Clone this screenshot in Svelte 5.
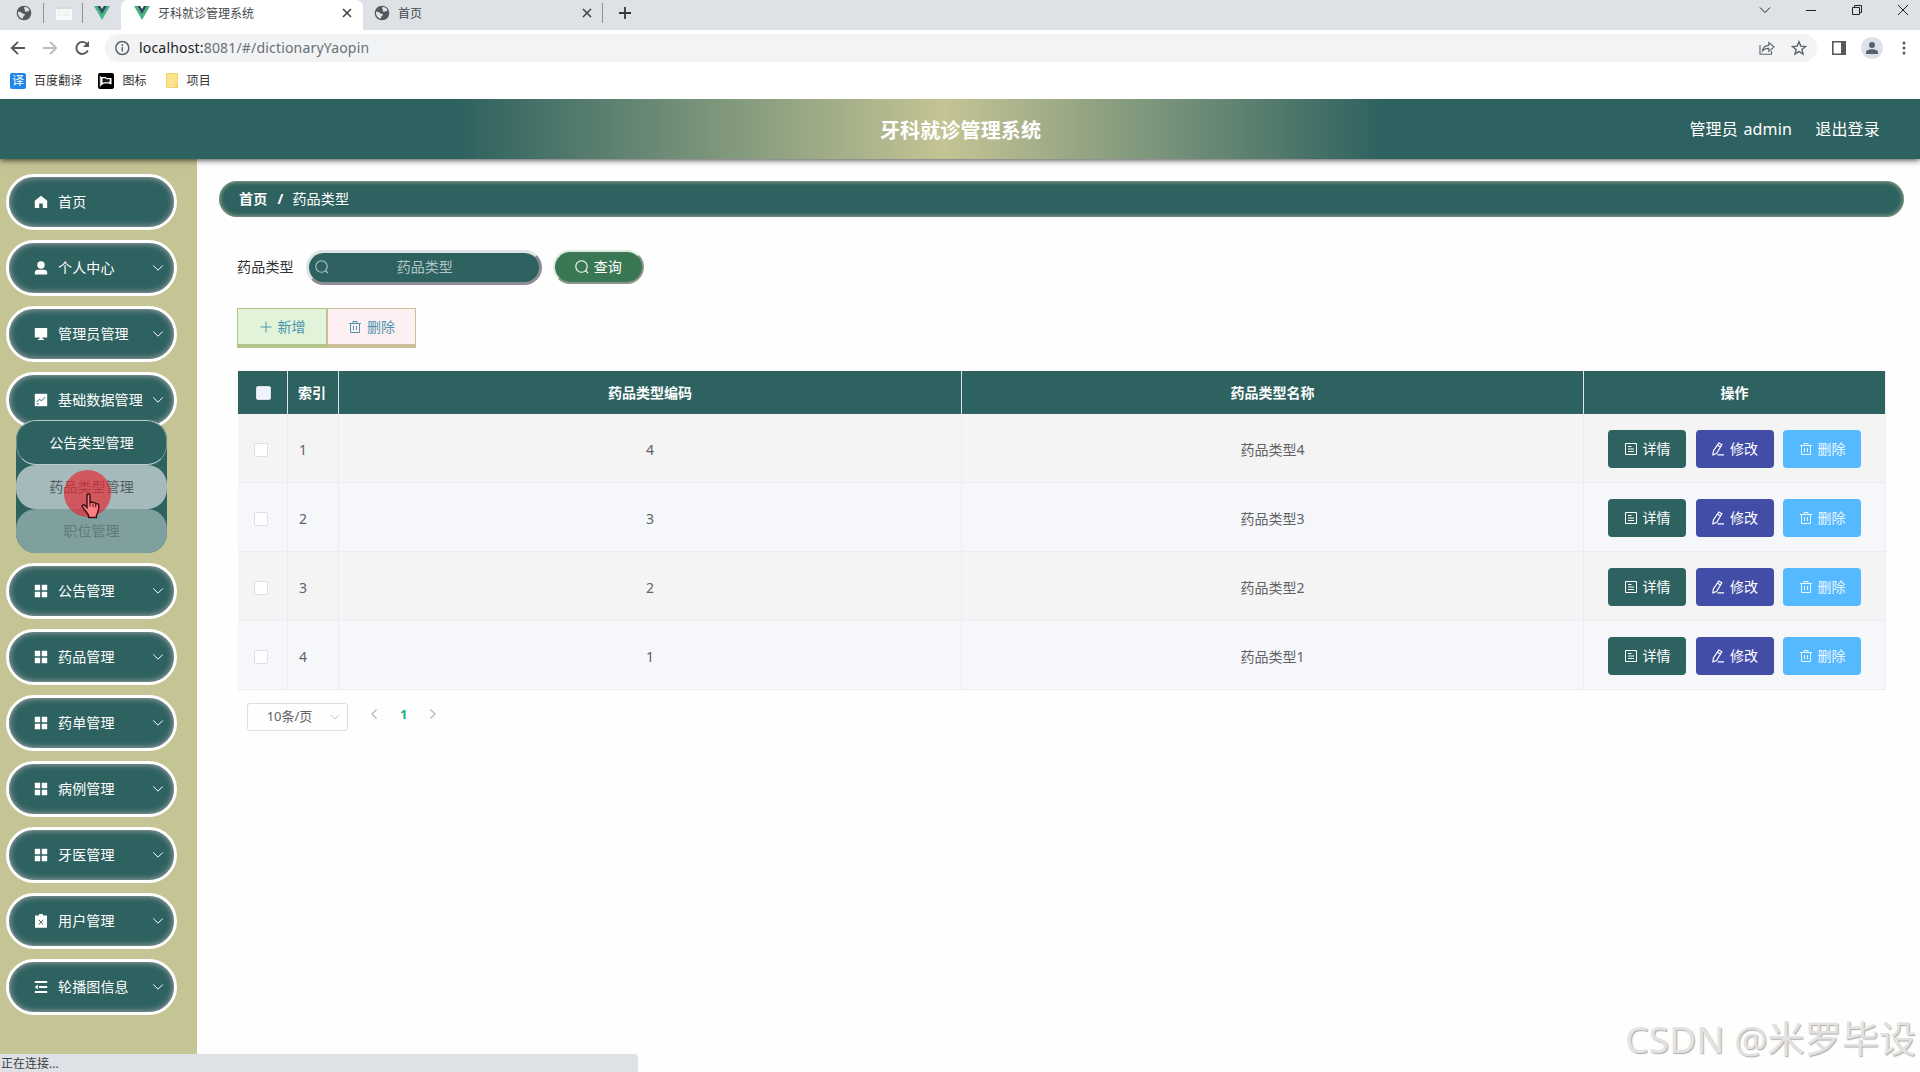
<script>
	const menu = [
		{ label: '首页', icon: 'home' },
		{ label: '个人中心', icon: 'user', arrow: true },
		{ label: '管理员管理', icon: 'screen', arrow: true },
		{
			label: '基础数据管理',
			icon: 'chart',
			arrow: true,
			children: [
				{ label: '公告类型管理', state: 'normal' },
				{ label: '药品类型管理', state: 'hover' },
				{ label: '职位管理', state: 'fading' }
			]
		},
		{ label: '公告管理', icon: 'grid', arrow: true },
		{ label: '药品管理', icon: 'grid', arrow: true },
		{ label: '药单管理', icon: 'grid', arrow: true },
		{ label: '病例管理', icon: 'grid', arrow: true },
		{ label: '牙医管理', icon: 'grid', arrow: true },
		{ label: '用户管理', icon: 'clipboard', arrow: true },
		{ label: '轮播图信息', icon: 'fold', arrow: true }
	];

	const rows = [4, 3, 2, 1].map((code, i) => ({ index: i + 1, code, name: `药品类型${code}` }));
</script>

{#snippet globe()}
	<svg width="16" height="16" viewBox="0 0 16 16">
		<circle cx="8" cy="8" r="7.3" fill="#54585d" />
		<path d="M8.2 2.2c2.2-.6 4.6 1 5.3 3.2-.8 1-2 .4-2.8 1.2C9.9 7.2 8.5 6.4 8.9 5.2 9.2 4.3 7.5 3.6 8.2 2.2zM2 6.8c1.7 0 3.2.4 4.3 1.4.8.8 2.5.2 2.6 1.4.1 1.1-1.4 1.3-1.7 2.300-.2.7-.2 1.300-.7 1.900C3.600 13 1.600 10 2 6.800z" fill="#dee1e6" />
	</svg>
{/snippet}

{#snippet vue()}
	<svg width="16" height="14" viewBox="0 0 16 14">
		<path d="M0 0h3.300L8 8l4.700-8H16L8 14z" fill="#41b883" />
		<path d="M3.200 0h3L8 3.100 9.800 0h3L8 8.300z" fill="#35495e" />
	</svg>
{/snippet}

{#snippet cross()}
	<svg width="10" height="10" viewBox="0 0 10 10" fill="none" stroke="#3c4043" stroke-width="1.5">
		<path d="M1 1l8 8M9 1l-8 8" />
	</svg>
{/snippet}

{#snippet trash()}
	<svg width="14" height="14" viewBox="0 0 14 14" fill="none" stroke="currentColor" stroke-width="1">
		<path d="M1 3.500h12M2.500 3.500v9h9v-9M5 3.300V1.500h4v1.800M5.500 6v4M8.500 6v4" />
	</svg>
{/snippet}

{#snippet search()}
	<svg width="14" height="14" viewBox="0 0 14 14" fill="none" stroke="currentColor" stroke-width="1.1">
		<circle cx="6.5" cy="6.5" r="5.7" />
		<path d="M10.300 10.300l2.700 2.700" />
	</svg>
{/snippet}

{#snippet menuIcon(name)}
	<svg class="menu-icon" width="14" height="14" viewBox="0 0 14 14" fill="#fff">
		{#if name === 'home'}
			<path d="M7 .8L.8 5.800V13h4.400V8.600h3.600V13h4.400V5.800z" />
		{:else if name === 'user'}
			<circle cx="7" cy="4" r="3.700" />
			<path d="M.8 13.500v-1.600C.8 10 2 8.800 4 8.800h6c2 0 3.200 1.200 3.200 3.100v1.600z" />
		{:else if name === 'screen'}
			<path d="M.8 1h12.400v9.600H.8zM5.500 10.500h3V12H10v1H4v-1h1.500z" />
		{:else if name === 'chart'}
			<path d="M.8.8h12.400v12.400H.8z" />
			<path d="M2.800 9l2.700-2.700 2 1.500 3.700-3.700M2.800 10.800h2" fill="none" stroke="#2e6260" />
		{:else if name === 'grid'}
			<path d="M.8.8h5.400v5.400H.8zM7.800.8h5.400v5.400H7.800zM.8 7.800h5.400v5.400H.8zM7.800 7.800h5.400v5.400H7.800z" />
		{:else if name === 'clipboard'}
			<path d="M5 0h4v1.500h4v12.300H1V1.500h4z" />
			<path d="M4.800 5.800l4.400 4.800M9.200 5.800l-4.400 4.800" fill="none" stroke="#2e6260" />
		{:else}
			<path d="M.8 1h12.400v1.900H.8zM5 6h8.200v1.900H5zM.8 11h12.400v1.900H.8zM3.800 4.600v4.800L.8 7z" />
		{/if}
	</svg>
{/snippet}

<div class="window">
	<div class="tabstrip">
		<div class="pinned first">{@render globe()}</div>
		<div class="pinned">
			<svg width="16" height="13" viewBox="0 0 16 13">
				<path d="M0 0h16v13H0z" fill="#f8faf9" />
				<path d="M0 0h16v2H0z" fill="#d3ddd9" />
				<path d="M2 5h3M7 5h6M2 8h3M7 8h6" stroke="#e2e7e5" />
			</svg>
		</div>
		<div class="pinned last">{@render vue()}</div>
		<div class="tab active">
			{@render vue()}
			<span>牙科就诊管理系统</span>
			{@render cross()}
		</div>
		<div class="tab">
			{@render globe()}
			<span>首页</span>
			{@render cross()}
		</div>
		<div class="new-tab">
			<svg width="14" height="14" viewBox="0 0 14 14" stroke="#34383c" stroke-width="1.8">
				<path d="M7 1v12M1 7h12" />
			</svg>
		</div>
		<div class="controls">
			<svg width="12" height="12" viewBox="0 0 12 12"><path d="M1 3.500l5 5 5-5" /></svg>
			<svg width="12" height="12" viewBox="0 0 12 12"><path d="M1 6.500h10" /></svg>
			<svg width="12" height="12" viewBox="0 0 12 12"><path d="M1.500 3.500h7v7h-7zM3.500 3.500v-2h7v7h-2" /></svg>
			<svg width="12" height="12" viewBox="0 0 12 12"><path d="M1 1l10 10M11 1L1 11" /></svg>
		</div>
	</div>

	<div class="toolbar">
		<div class="nav">
			<svg width="16" height="16" viewBox="0 0 16 16"><path d="M15 8H2M8 1.800L1.800 8 8 14.200" /></svg>
			<svg class="dim" width="16" height="16" viewBox="0 0 16 16"><path d="M1 8h13M8 1.800L14.200 8 8 14.200" /></svg>
			<svg width="16" height="16" viewBox="0 0 16 16">
				<path d="M13.800 10.500A6 6 0 1 1 13.100 4.200" />
				<path d="M15 1v6H9z" fill="#55595d" stroke="none" />
			</svg>
		</div>
		<div class="address">
			<svg width="16" height="16" viewBox="0 0 16 16" fill="none" stroke="#5f6368" stroke-width="1.5">
				<circle cx="8.300" cy="8" r="6.500" />
				<path d="M8.300 7v4.500M8.300 4.300v1.600" />
			</svg>
			<span class="url"><b>localhost:</b>8081/#/dictionaryYaopin</span>
			<svg width="16" height="16" viewBox="0 0 16 16" fill="none" stroke="#5f6368" stroke-width="1.1">
				<path d="M1 5v9.300h11.500V11" />
				<path d="M3.500 11c.4-3.600 2.500-5.400 6.300-5.600V2.500L15 7l-5.200 4.300V8.400C7 8.300 5 9 3.500 11z" />
			</svg>
			<svg width="16" height="16" viewBox="0 0 16 16" fill="none" stroke="#5f6368" stroke-width="1.4">
				<path d="M8 1.800l1.800 4.300 4.700.4-3.600 3 1.100 4.600L8 11.600l-4 2.500 1.100-4.600-3.600-3 4.700-.4z" />
			</svg>
		</div>
		<div class="tools">
			<svg width="16" height="16" viewBox="0 0 16 16">
				<path d="M1.800 1.800h12.400v12.400H1.800z" fill="#fff" stroke="#55595d" stroke-width="1.6" />
				<path d="M10 1h5v14h-5z" fill="#55595d" />
			</svg>
			<div class="avatar">
				<svg width="14" height="14" viewBox="0 0 14 14" fill="#5a6072">
					<circle cx="7" cy="4" r="3" />
					<path d="M1 13v-1.500C1 9.300 3.500 8.300 7 8.300s6 1 6 3.200V13z" />
				</svg>
			</div>
			<svg width="4" height="16" viewBox="0 0 4 16" fill="#55595d">
				<circle cx="2" cy="3" r="1.5" /><circle cx="2" cy="8" r="1.5" /><circle cx="2" cy="13" r="1.5" />
			</svg>
		</div>
	</div>

	<div class="bookmarks">
		<span class="mark translate">译</span>
		<span class="name">百度翻译</span>
		<svg class="mark" width="16" height="16" viewBox="0 0 16 16">
			<rect width="16" height="16" rx="2" fill="#000" />
			<path d="M2.300 3v10.500" stroke="#fff" />
			<path d="M3 4h4.500l1.500 1h4.500v6.500l-3-1H6L3 12.500z" fill="#fff" />
			<path d="M4.500 5.300h2.800l1.500 1h3.200l-.7 3H6l-1.500.7z" fill="#1a1a1a" />
		</svg>
		<span class="name">图标</span>
		<svg class="mark folder" width="13" height="15" viewBox="0 0 13 15">
			<path d="M.5.5h11v14H.5z" fill="#fbe38e" stroke="#f2d06b" />
			<path d="M9.500 10H12v4.500H9.500z" fill="#f5d05e" />
		</svg>
		<span class="name">项目</span>
	</div>

	<header>
		<h1>牙科就诊管理系统</h1>
		<div class="account">
			<span>管理员 admin</span>
			<span>退出登录</span>
		</div>
	</header>

	<div class="body">
		<aside>
			{#each menu as item}
				<div class="menu-item">
					{@render menuIcon(item.icon)}
					<span>{item.label}</span>
					{#if item.arrow}
						<svg class="arrow" width="12" height="12" viewBox="0 0 12 12" fill="none" stroke="#fff">
							<path d="M1.300 3.500L6 8.200l4.700-4.700" />
						</svg>
					{/if}
				</div>
				{#if item.children}
					<div class="submenu">
						{#each item.children as child}
							<div class="sub-item {child.state}">{child.label}</div>
						{/each}
						<div class="pointer">
							<svg width="20" height="26" viewBox="0 0 20 26">
								<path d="M6 2.500C6 .5 9 .5 9 2.500V10c.3-1.500 3-1.300 3 .3.500-1.200 2.800-.8 2.800.8.700-.9 3-.5 3 1.400 0 4-.4 6.500-2.300 9.500v2.500H7.500V22C5.500 19.500 3.500 16.500 1.500 14 .3 12.300 2.500 11 4 12.500l2 2z" fill="#fb7f84" stroke="#3b1114" stroke-width="1.4" />
								<path d="M9 10v3.500M12 11v3M14.800 12v2.500" stroke="#3b1114" />
							</svg>
						</div>
					</div>
				{/if}
			{/each}
		</aside>

		<main>
			<div class="breadcrumb"><b>首页</b><b class="slash">/</b><span>药品类型</span></div>

			<div class="content">
				<div class="filter">
					<span>药品类型</span>
					<div class="field">
						{@render search()}
						<span>药品类型</span>
					</div>
					<button class="query">{@render search()}查询</button>
				</div>

				<div class="actions">
					<button class="add">
						<svg width="14" height="14" viewBox="0 0 14 14" stroke="currentColor"><path d="M7 1.500v11M1.500 7h11" /></svg>
						新增
					</button>
					<button class="remove">{@render trash()}删除</button>
				</div>

				<div class="table">
					<div class="row head">
						<div class="check"><i></i></div>
						<div class="index">索引</div>
						<div>药品类型编码</div>
						<div>药品类型名称</div>
						<div>操作</div>
					</div>
					{#each rows as row}
						<div class="row">
							<div class="check"><i></i></div>
							<div class="index">{row.index}</div>
							<div>{row.code}</div>
							<div>{row.name}</div>
							<div class="ops">
								<button class="detail">
									<svg width="14" height="14" viewBox="0 0 14 14" fill="none" stroke="currentColor">
										<path d="M1.500 1.500h11v11h-11zM4 4.500h3.500M4 7h6M4 9.500h6" />
									</svg>
									详情
								</button>
								<button class="edit">
									<svg width="14" height="14" viewBox="0 0 14 14" fill="none" stroke="currentColor" stroke-width="1.2">
										<path d="M7.800 1l3 1.700-5.200 8.800-3.700 1.300.5-3.800zM6.500 3.300l3 1.700M6.500 12.900h6.500" />
									</svg>
									修改
								</button>
								<button class="delete">{@render trash()}删除</button>
							</div>
						</div>
					{/each}
				</div>

				<div class="pagination">
					<div class="size">
						<span>10条/页</span>
						<svg width="12" height="12" viewBox="0 0 12 12" fill="none" stroke="#c0c4cc"><path d="M2 4l4 4 4-4" /></svg>
					</div>
					<svg width="12" height="12" viewBox="0 0 12 12" fill="none" stroke="#b4b8bf" stroke-width="1.3"><path d="M8.500 1.500L4 6l4.500 4.500" /></svg>
					<b>1</b>
					<svg width="12" height="12" viewBox="0 0 12 12" fill="none" stroke="#b4b8bf" stroke-width="1.3"><path d="M3.500 1.500L8 6l-4.500 4.500" /></svg>
				</div>
			</div>
		</main>
	</div>

	<div class="status">正在连接...</div>
	<div class="watermark">CSDN @米罗毕设</div>
</div>

<style>
	:global(body) {
		margin: 0;
		overflow: hidden;
	}

	.window {
		position: relative;
		display: flex;
		flex-direction: column;
		width: 1920px;
		height: 1072px;
		overflow: hidden;
		background: #fefefe;
		color: #333;
		font: 14px/20px 'Noto Sans', 'Noto Sans CJK SC', sans-serif;
	}

	.window *,
	.window {
		box-sizing: border-box;
	}

	svg {
		flex: none;
		display: block;
	}

	button {
		display: flex;
		align-items: center;
		justify-content: center;
		padding: 0;
		font: inherit;
	}

	/* browser chrome */
	.tabstrip {
		display: flex;
		height: 30px;
		background: #dee1e6;
		font-size: 12px;
	}

	.pinned,
	.tab,
	.new-tab {
		display: flex;
		align-items: center;
		padding-bottom: 4px;
	}

	.pinned {
		justify-content: center;
		width: 39px;
		position: relative;
	}

	.pinned.first {
		width: 44px;
		padding-left: 4px;
	}

	.pinned.last {
		width: 38px;
	}

	.pinned:not(.last)::after,
	.tab:not(.active)::after {
		content: '';
		position: absolute;
		right: 0;
		top: 3px;
		width: 1px;
		height: 20px;
		background: #8e9196;
	}

	.tab {
		position: relative;
		width: 240px;
		padding-left: 11px;
		padding-right: 11px;
	}

	.tab span {
		flex: 1;
		padding: 2px 0 0 8px;
		color: #45494d;
	}

	.tab.active {
		width: 242px;
		padding-left: 13px;
		padding-right: 11px;
		background: #fff;
		border-radius: 7px 7px 0 0;
	}

	.new-tab {
		padding-left: 15px;
	}

	.controls {
		display: flex;
		gap: 34px;
		margin-left: auto;
		padding: 4px 11px 0 0;
		fill: none;
		stroke: #222;
	}

	.toolbar {
		display: flex;
		align-items: center;
		height: 36px;
		background: #fff;
	}

	.nav {
		display: flex;
		gap: 16px;
		width: 105px;
		padding-left: 10px;
		fill: none;
		stroke: #55595d;
		stroke-width: 1.9;
	}

	.nav .dim {
		stroke: #babcbe;
	}

	.address {
		display: flex;
		align-items: center;
		width: 1712px;
		height: 28px;
		padding: 0 10px 0 9px;
		border-radius: 14px;
		background: #f1f3f4;
	}

	.url {
		flex: 1;
		padding-left: 9px;
		color: #6c7074;
		letter-spacing: 0.18px;
	}

	.url b {
		color: #222;
		font-weight: 400;
	}

	.address svg:last-child {
		margin-left: 16px;
	}

	.tools {
		display: flex;
		align-items: center;
		padding-left: 14px;
	}

	.avatar {
		display: flex;
		align-items: center;
		justify-content: center;
		width: 22px;
		height: 22px;
		margin: 0 19px 0 14px;
		border-radius: 50%;
		background: #dee1e9;
	}

	.bookmarks {
		display: flex;
		align-items: center;
		height: 33px;
		padding: 0 0 4px 10px;
		background: #fff;
		font-size: 12px;
	}

	.translate {
		width: 16px;
		height: 16px;
		border-radius: 2px;
		background: #1f86ea;
		color: #fff;
		line-height: 15px;
		text-align: center;
	}

	.name {
		margin: 0 16px 0 8px;
		letter-spacing: 0.1px;
	}

	.folder {
		margin-left: 3px;
	}

	/* application */
	header {
		position: relative;
		z-index: 1;
		display: grid;
		grid-template-columns: 1fr auto 1fr;
		align-items: center;
		flex: none;
		height: 60px;
		background: linear-gradient(90deg, #2e6260 24%, #c4c494 49.2%, #2e6260 72%);
		box-shadow: 0 1px 6px rgba(0, 0, 0, 0.75);
		clip-path: inset(0 0 -10px 0);
		color: #fff;
	}

	h1 {
		grid-column: 2;
		margin: 0;
		padding: 3px 0 0 1px;
		font-size: 20px;
		line-height: 28px;
		letter-spacing: 0.15px;
	}

	.account {
		display: flex;
		justify-content: flex-end;
		gap: 23px;
		padding-right: 40px;
		font-size: 16px;
		letter-spacing: 0.2px;
		word-spacing: 1px;
	}

	.body {
		display: flex;
		flex: 1;
	}

	aside {
		width: 197px;
		padding: 15px 20px 0 6px;
		background: #c4c494;
	}

	.menu-item {
		display: flex;
		align-items: center;
		height: 56px;
		margin-bottom: 10px;
		padding: 0 10px 0 25px;
		border: 3px solid #fff;
		border-radius: 28px;
		background: #2e6260;
		box-shadow: inset 0 0 6px #b9aeb4;
		color: #fff;
		letter-spacing: 0.15px;
	}

	.menu-item span {
		flex: 1;
		padding-left: 10px;
		white-space: nowrap;
	}

	.submenu {
		position: relative;
		margin: -18px 10px 10px;
		border-radius: 20px;
		background: #2e6260;
	}

	.sub-item {
		height: 44px;
		border-radius: 20px;
		line-height: 43px;
		text-align: center;
		letter-spacing: 0.1px;
	}

	.normal {
		height: 45px;
		border: 1px solid #b9cccb;
		border-left-color: #6f9190;
		border-right-color: #6f9190;
		color: #fff;
	}

	.hover {
		background: #a5babb;
		color: #555f60;
	}

	.fading {
		background: #7fa09f;
		color: #617a7b;
	}

	.pointer {
		position: absolute;
		left: 48px;
		top: 50px;
		width: 47px;
		height: 47px;
		border-radius: 50%;
		background: rgba(228, 40, 50, 0.68);
	}

	.pointer svg {
		position: absolute;
		left: 17px;
		top: 23px;
	}

	main {
		flex: 1;
		padding: 22px 16px 0 22px;
	}

	.breadcrumb {
		display: flex;
		align-items: center;
		height: 36px;
		padding-left: 20px;
		border-radius: 18px;
		background: #2e6260;
		box-shadow: inset 0 0 5px #c4c494;
		color: #fff;
		letter-spacing: 0.2px;
	}

	.slash {
		margin: 0 9px 0 10px;
	}

	.content {
		padding: 32px 18px 0 18px;
	}

	.filter {
		display: flex;
		align-items: center;
		height: 36px;
	}

	.filter > span {
		letter-spacing: 0.2px;
	}

	.field {
		position: relative;
		display: flex;
		align-items: center;
		width: 236px;
		height: 35px;
		margin: 0 11px 0 12px;
		padding-left: 6px;
		border: 3px solid;
		border-color: #dde3e5 #8c8c96 #8c8c96 #dde3e5;
		border-radius: 18px;
		background: #2e6260;
		color: #b2c4c6;
	}

	.field span {
		flex: 1;
		padding-right: 18px;
		text-align: center;
	}

	.query {
		gap: 5px;
		width: 91px;
		height: 34px;
		border: 2px solid;
		border-color: #dcebdc #8b938b #8b938b #dcebdc;
		border-radius: 17px;
		background: #3a7854;
		color: #fff;
	}

	.actions {
		display: flex;
		margin-top: 23px;
		color: #4b95ae;
	}

	.actions button {
		gap: 5px;
		width: 90px;
		height: 40px;
		border: 1px solid #c9c09a;
		border-bottom-width: 4px;
		color: inherit;
	}

	.actions .add {
		border-color: #b4c488;
		background: #e1f3d8;
	}

	.actions .remove {
		width: 89px;
		background: #fef0f2;
	}

	.table {
		margin: 23px 0 0 1px;
		border-right: 1px solid #ebeef5;
	}

	.row {
		display: grid;
		grid-template-columns: 50px 51px 623px 622px 1fr;
		height: 69px;
		border-bottom: 1px solid #ebedf0;
		background: #f4f4f4;
		color: #606266;
	}

	.row:nth-child(odd) {
		background: #f6f7fb;
	}

	.row > div {
		display: flex;
		align-items: center;
		justify-content: center;
		padding-top: 3px;
		border-right: 1px solid #ebedf0;
	}

	.row > div:last-child {
		border-right: 0;
	}

	.row > .index {
		justify-content: flex-start;
		padding-left: 11px;
	}

	.row.head {
		height: 43px;
		border-bottom: 0;
		background: #2e6260;
		color: #fff;
		font-weight: 700;
	}

	.row.head > div {
		padding-top: 0;
		border-color: #dbe5e5;
	}

	.row.head > .index {
		padding-left: 10px;
	}

	.check i {
		width: 14px;
		height: 14px;
		margin-right: 3px;
		border: 1px solid #dcdfe6;
		border-radius: 2px;
		background: #fff;
	}

	.head .check i {
		width: 15px;
		margin: 0 0 0 1px;
		background: #edf2fc;
	}

	.row > .ops {
		gap: 9.5px;
		padding-top: 0;
	}

	.ops button {
		gap: 5px;
		width: 78px;
		height: 38px;
		margin-top: 1px;
		border: 0;
		border-radius: 4px;
		color: #fff;
	}

	.detail {
		background: #2e6260;
	}

	.edit {
		background: #424da8;
	}

	.ops .delete {
		background: #55b9ff;
		color: #ebf7ff;
	}

	.pagination {
		display: flex;
		align-items: center;
		gap: 19px;
		padding: 13px 0 0 10px;
	}

	.pagination > b,
	.pagination > svg {
		margin-bottom: 6px;
	}

	.pagination b {
		padding: 0 1px;
		color: #1ab37f;
		font-size: 13px;
	}

	.size {
		display: flex;
		align-items: center;
		width: 101px;
		height: 28px;
		margin-right: 1px;
		padding-right: 6px;
		border: 1px solid #dcdfe6;
		border-radius: 3px;
		color: #606266;
		font-size: 13px;
	}

	.size span {
		flex: 1;
		padding: 0 0 2px 2px;
		text-align: center;
	}

	.status {
		position: absolute;
		z-index: 2;
		left: 0;
		bottom: 0;
		width: 638px;
		height: 18px;
		padding-left: 1px;
		border-radius: 0 4px 0 0;
		background: #dee1e6;
		color: #3c4043;
		font-size: 12px;
		line-height: 20px;
	}

	.watermark {
		position: absolute;
		right: 4px;
		bottom: 11px;
		color: #e2e2e2;
		font-size: 37px;
		line-height: 44px;
		letter-spacing: 0.1px;
		text-shadow: 1px 1px 1px #aaa;
	}
</style>
